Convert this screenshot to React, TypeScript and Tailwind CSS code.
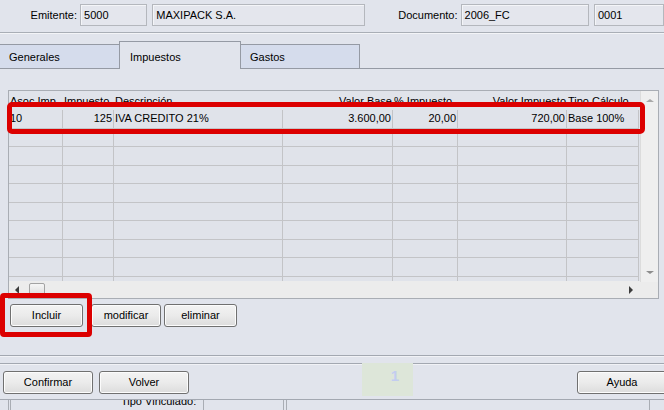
import type { ReactNode } from "react"

type Column = {
  head: string
  width: string
  align: string
}

const columns: Column[] = [
  { head: "Asoc Imp", width: "w-[54px]", align: "text-left" },
  { head: "Impuesto", width: "w-[51px]", align: "text-right" },
  { head: "Descripción", width: "w-[169px]", align: "text-left" },
  { head: "Valor Base", width: "w-[110px]", align: "text-right" },
  { head: "% Impuesto", width: "w-[65px]", align: "text-right" },
  { head: "Valor Impuesto", width: "w-[109px]", align: "text-right" },
  { head: "Tipo Cálculo", width: "w-[72px]", align: "text-left" },
]

const headAlign = ["text-left", "text-left", "text-left", "text-right", "text-left", "text-right", "text-left"]

const rows: string[][] = [
  ["10", "125", "IVA CREDITO 21%", "3.600,00", "20,00", "720,00", "Base 100%"],
  ...Array.from({ length: 9 }, () => ["", "", "", "", "", "", ""]),
]

function Field({ className, children }: { className: string; children?: ReactNode }) {
  return (
    <div
      className={`flex h-[22px] items-center border border-[#b4b7bd] bg-[#e4e6ed] pl-[3px] shadow-[inset_1px_1px_0_#f4f5f8] ${className}`}
    >
      {children}
    </div>
  )
}

function Button({ className, children }: { className: string; children: ReactNode }) {
  return (
    <div
      className={`flex items-center justify-center rounded-[3px] border border-[#707070] bg-gradient-to-b from-[#f3f3f3] via-[#ebebeb] to-[#dcdcdc] shadow-[inset_0_0_0_1px_#fcfcfc] ${className}`}
    >
      {children}
    </div>
  )
}

function Tab({ active, children, className }: { active?: boolean; children: ReactNode; className: string }) {
  if (active) {
    return (
      <div className={`relative z-10 -mb-px flex h-[28px] items-center border border-b-0 border-[#959aa4] bg-[#e1e4ec] pl-[10px] pt-[4px] ${className}`}>
        {children}
      </div>
    )
  }
  return (
    <div className={`flex h-[24px] items-center border border-b-0 border-[#959aa4] bg-[#d5dcec] pl-[9px] pt-[2px] ${className}`}>
      {children}
    </div>
  )
}

function Grid() {
  return (
    <div className="h-[191px] w-[631px] overflow-hidden bg-[#e0e3ea]">
      <div className="flex h-[19px] items-center">
        {columns.map((c, i) => (
          <div
            key={c.head}
            className={`${c.width} ${headAlign[i]} h-full overflow-hidden whitespace-nowrap pl-[1px] pr-[1px] pt-[4px] leading-[13px]`}
          >
            {c.head}
          </div>
        ))}
      </div>
      {rows.map((r, ri) => (
        <div key={ri} className="flex h-[18.5px]">
          {r.map((v, ci) => (
            <div
              key={ci}
              className={`${columns[ci].width} ${columns[ci].align} flex h-full items-center overflow-hidden whitespace-nowrap border-b border-r border-[#c3c4c7] px-[1px] ${columns[ci].align === "text-right" ? "justify-end" : "justify-start"}`}
            >
              {v}
            </div>
          ))}
        </div>
      ))}
    </div>
  )
}

function Table() {
  return (
    <div className="ml-[8px] mt-[21px] flex h-[209px] w-[651px] border border-[#a9adb4] bg-[#ededed]">
      <div className="flex w-[631px] flex-col">
        <Grid />
        {/* horizontal scrollbar */}
        <div className="flex h-[17px] items-center bg-[#ececec]">
          <div className="ml-[6px] h-0 w-0 border-y-[4px] border-r-[4px] border-y-transparent border-r-[#3c3c3c]" />
          <div className="ml-[10px] h-[14px] w-[16px] rounded-[2px] border border-[#a3a3a3] bg-gradient-to-b from-[#f6f6f6] to-[#dcdcdc]" />
          <div className="ml-auto mr-[7px] h-0 w-0 border-y-[4px] border-l-[4px] border-y-transparent border-l-[#3c3c3c]" />
        </div>
      </div>
      {/* vertical scrollbar */}
      <div className="flex w-[18px] flex-col">
        <div className="flex h-[191px] flex-col items-center border-l border-[#dcdcdc] bg-[#efefef]">
          <div className="mt-[8px] h-0 w-0 border-x-[4px] border-b-[3px] border-x-transparent border-b-[#a8a8a8]" />
          <div className="mt-auto mb-[8px] h-0 w-0 border-x-[4px] border-t-[3px] border-x-transparent border-t-[#8c8c8c]" />
        </div>
        <div className="flex-1 bg-[#ececec]" />
      </div>
    </div>
  )
}

export default function App() {
  return (
    <div className="relative flex h-[410px] w-[664px] flex-col overflow-hidden bg-[#e1e4ec] font-['Liberation_Sans',Arial,sans-serif] text-[11px] leading-none text-black">
      {/* header fields */}
      <div className="flex h-[32px] shrink-0 items-start pt-[4px]">
        <div className="flex h-[22px] w-[78px] items-center justify-end">Emitente:</div>
        <Field className="ml-[3px] w-[68px]">5000</Field>
        <Field className="ml-[5px] w-[215px]">MAXIPACK S.A.</Field>
        <div className="flex h-[22px] w-[94px] items-center justify-end">Documento:</div>
        <Field className="ml-[3px] w-[130px]">2006_FC</Field>
        <Field className="ml-[5px] w-[70px] shrink-0">0001</Field>
      </div>
      <div className="h-px shrink-0 bg-[#a9aeb6]" />
      <div className="h-px shrink-0 bg-[#f3f4f7]" />

      {/* tabs */}
      <div className="flex h-[35px] shrink-0 items-end border-b border-[#959aa4]">
        <Tab className="-ml-px w-[121px]">Generales</Tab>
        <Tab active className="w-[122px] -ml-px">Impuestos</Tab>
        <Tab className="w-[120px] -ml-px">Gastos</Tab>
      </div>

      <Table />

      <div className="ml-[10px] mt-[5px] flex h-[23px] shrink-0">
        <Button className="w-[73px]">Incluir</Button>
        <Button className="ml-[8px] w-[70px]">modificar</Button>
        <Button className="ml-[3px] w-[73px]">eliminar</Button>
      </div>

      {/* footer separators */}
      <div className="mt-[28px] h-px shrink-0 bg-[#a3a8b1]" />
      <div className="h-px shrink-0 bg-[#f1f2f6]" />
      <div className="mt-[6px] h-px shrink-0 bg-[#a3a8b1]" />
      <div className="h-px shrink-0 bg-[#f1f2f6]" />

      <div className="relative mt-[6px] flex h-[23px] shrink-0">
        <Button className="ml-[3px] w-[90px]">Confirmar</Button>
        <Button className="ml-[6px] w-[90px]">Volver</Button>
        <Button className="ml-auto -mr-[3px] w-[90px]">Ayuda</Button>
      </div>

      <div className="mt-[5px] h-px shrink-0 bg-[#a3a8b1]" />
      <div className="relative h-[11px] shrink-0 overflow-hidden">
        <div className="absolute left-[8px] top-0 h-full w-px bg-[#a9adb4]" />
        <div className="absolute left-[10px] top-0 h-full w-px bg-[#a9adb4]" />
        <div className="absolute left-[121px] top-[-5px] text-[11px] leading-[13px]">Tipo Vinculado:</div>
        <div className="absolute left-[203px] top-0 h-full w-px bg-[#a9adb4]" />
        <div className="absolute left-[283px] top-0 h-full w-px bg-[#a9adb4]" />
        <div className="absolute left-[286px] top-0 h-full w-px bg-[#a9adb4]" />
        <div className="absolute left-[649px] top-0 h-full w-px bg-[#a9adb4]" />
      </div>

      {/* faint floating badge */}
      <div className="absolute left-[362px] top-[363px] flex h-[33px] w-[51px] justify-end bg-[#dde6d9] pr-[14px] pt-[5px]">
        <span className="text-[15px] font-bold leading-[15px] text-[#c3cdf0]">1</span>
      </div>

      {/* highlight outlines */}
      <div className="pointer-events-none absolute left-[7px] top-[102px] h-[32px] w-[638px] rounded-[5px] border-[5px] border-[#dc0000]" />
      <div className="pointer-events-none absolute left-0 top-[293px] h-[44px] w-[92px] rounded-[4px] border-[5px] border-[#dc0000]" />
    </div>
  )
}
